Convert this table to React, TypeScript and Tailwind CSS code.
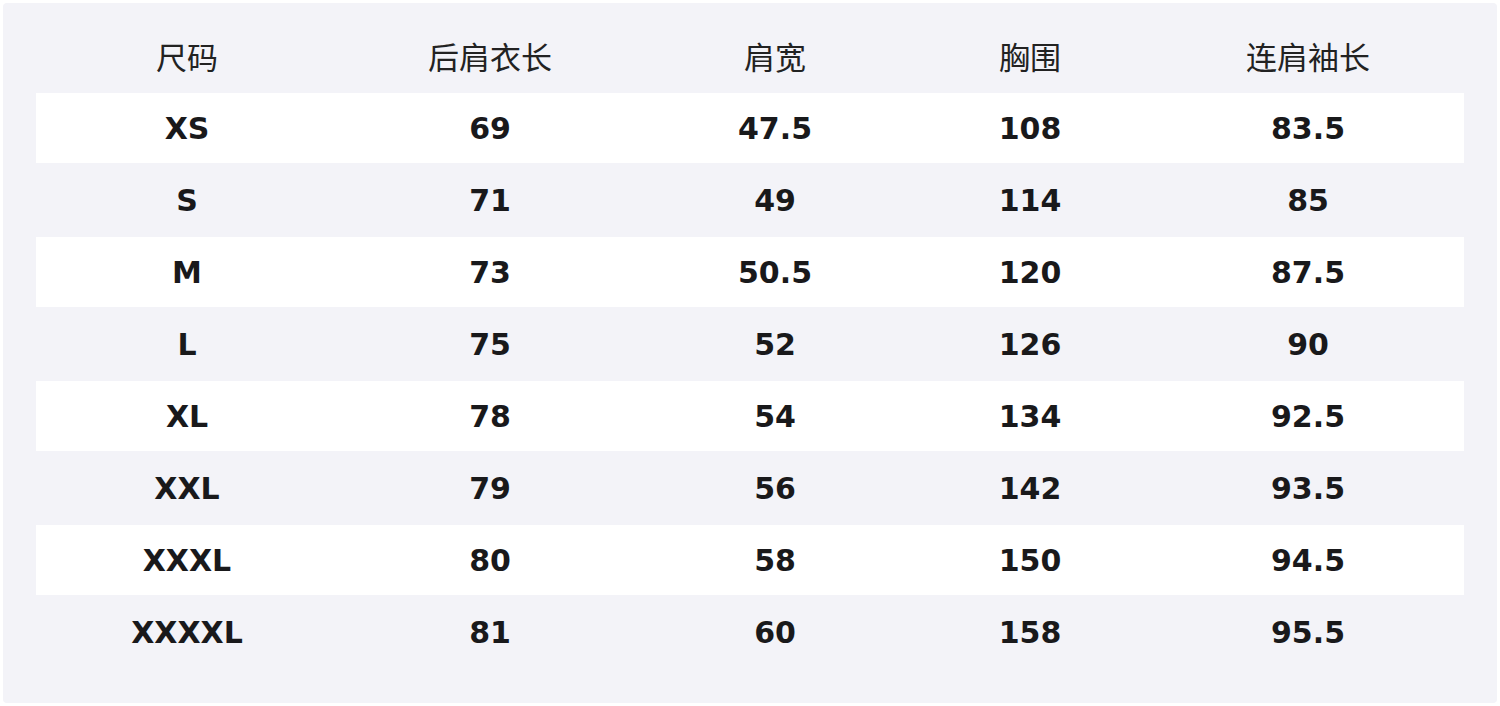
const headers = ["尺码", "后肩衣长", "肩宽", "胸围", "连肩袖长"];

const rows = [
  ["XS", "69", "47.5", "108", "83.5"],
  ["S", "71", "49", "114", "85"],
  ["M", "73", "50.5", "120", "87.5"],
  ["L", "75", "52", "126", "90"],
  ["XL", "78", "54", "134", "92.5"],
  ["XXL", "79", "56", "142", "93.5"],
  ["XXXL", "80", "58", "150", "94.5"],
  ["XXXXL", "81", "60", "158", "95.5"],
];

const widths = ["w-[302px]", "w-[304px]", "w-[266px]", "w-[244px]", "w-[312px]"];

export default function App() {
  return (
    <div className="min-h-screen bg-white p-[3px]">
      <div
        className="h-[700px] rounded-sm bg-[#f3f3f8] px-[33px] pt-[16px]"
        style={{ fontFamily: '"DejaVu Sans", "Noto Sans CJK SC", sans-serif' }}
      >
        <table className="w-[1428px] border-separate border-spacing-x-0 border-spacing-y-[2px] text-[#19191b]">
          <thead>
            <tr className="h-[70px]">
              {headers.map((h, i) => (
                <th
                  key={h}
                  className={`${widths[i]} p-0 text-center text-[31px] font-normal text-[#222]`}
                  style={{ fontFamily: '"Noto Sans CJK SC", sans-serif' }}
                >
                  {h}
                </th>
              ))}
            </tr>
          </thead>
          <tbody>
            {rows.map((r, ri) => (
              <tr key={r[0]} className={`h-[70px] ${ri % 2 === 0 ? "bg-white" : ""}`}>
                {r.map((c, ci) => (
                  <td key={ci} className="p-0 text-center text-[30px] font-bold">
                    {c}
                  </td>
                ))}
              </tr>
            ))}
          </tbody>
        </table>
      </div>
    </div>
  );
}
